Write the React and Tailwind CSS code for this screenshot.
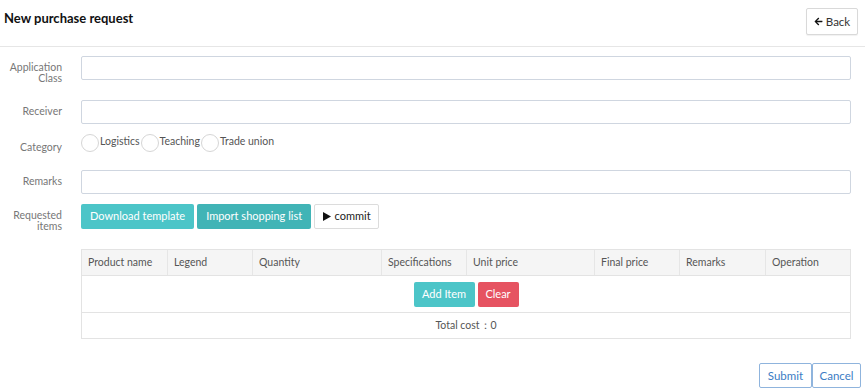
import React from "react";
import { FaArrowLeft } from "react-icons/fa";

const columns = [
  { name: "Product name", w: "w-[86px]" },
  { name: "Legend", w: "w-[85px]" },
  { name: "Quantity", w: "w-[129px]" },
  { name: "Specifications", w: "w-[85px]" },
  { name: "Unit price", w: "w-[128px]" },
  { name: "Final price", w: "w-[85px]" },
  { name: "Remarks", w: "w-[86px]" },
  { name: "Operation", w: "flex-1" },
];

// label sits a few px below the top of its field, like the original form
const Row = ({ label, children }) => (
  <div className="flex items-start">
    <div className="h-[24px] w-[62px] shrink-0 pt-[6px] text-right text-[10.5px] leading-[11px] text-[#777]">
      {label}
    </div>
    <div className="ml-[19px] flex-1">{children}</div>
  </div>
);

const Input = () => (
  <div className="h-[24px] w-full rounded-[2px] border border-[#cfd6e0] bg-white" />
);

const Radio = ({ label }) => (
  <label className="flex h-[18px] items-center">
    <span className="h-[18px] w-[18px] rounded-full border border-[#d6d6d6] bg-white" />
    <span className="ml-[1px] mr-[1px] -mt-[3px] text-[10.5px] text-[#555]">{label}</span>
  </label>
);

export default function App() {
  return (
    <div className="h-[392px] w-[865px] bg-white font-['Lato',sans-serif] text-[#333]">
      <div className="flex h-[47px] items-start justify-between border-b border-[#e6e6e6] pl-[4px] pr-[7px]">
        <h1 className="mt-[9px] text-[13px] font-bold text-[#111]">New purchase request</h1>
        <button className="mt-[8px] flex h-[27px] w-[52px] items-center justify-center gap-[3px] rounded-[2px] border border-[#d9d9d9] bg-white text-[11.5px] text-[#333] shadow-[0_1px_1px_rgba(0,0,0,0.06)]">
          <FaArrowLeft className="h-[9px] w-[9px] text-[#111]" />
          Back
        </button>
      </div>

      <div className="pr-[14px]">
        <div className="mt-[9px]">
          <Row label={<>Application<br />Class</>}>
            <Input />
          </Row>
        </div>
        <div className="mt-[20px]">
          <Row label="Receiver">
            <Input />
          </Row>
        </div>
        <div className="mt-[10px]">
          <Row label={<span className="block pt-[2px]">Category</span>}>
            <div className="flex">
              <Radio label="Logistics" />
              <Radio label="Teaching" />
              <Radio label="Trade union" />
            </div>
          </Row>
        </div>
        <div className="mt-[12px]">
          <Row label="Remarks">
            <Input />
          </Row>
        </div>
        <div className="mt-[10px]">
          <Row label={<>Requested<br />items</>}>
            <div className="flex gap-[3px]">
              <button className="h-[25px] rounded-[2px] bg-[#4cc5c8] px-[9px] text-[11px] text-white">Download template</button>
              <button className="h-[25px] rounded-[2px] bg-[#41b4b6] px-[9px] text-[11px] text-white">Import shopping list</button>
              <button className="flex h-[25px] w-[65px] items-center justify-center gap-[4px] rounded-[2px] border border-[#dcdcdc] bg-white text-[11px] text-[#222]">
                <svg width="8" height="9" viewBox="0 0 8 9">
                  <path d="M0 0 L8 4.5 L0 9 Z" fill="#111" />
                </svg>
                commit
              </button>
            </div>
            <div className="mt-[20px] border border-[#e3e3e3] text-[10.5px] text-[#555]">
              <div className="flex h-[25px] bg-[#f5f5f5]">
                {columns.map((c, i) => (
                  <div
                    key={c.name}
                    className={`${c.w} flex items-center px-[6px] ${i < columns.length - 1 ? "border-r border-[#e6e6e6]" : ""}`}
                  >
                    {c.name}
                  </div>
                ))}
              </div>
              <div className="flex h-[37px] items-center justify-center gap-[3px] border-t border-[#e3e3e3]">
                <button className="h-[25px] w-[61px] rounded-[2px] bg-[#4cc5c8] text-[11px] text-white">Add Item</button>
                <button className="h-[25px] w-[41px] rounded-[2px] bg-[#e65361] text-[11px] text-white">Clear</button>
              </div>
              <div className="flex h-[26px] items-center justify-center border-t border-[#e3e3e3]">
                Total cost：0
              </div>
            </div>
          </Row>
        </div>
      </div>

      <div className="mt-[24px] flex justify-end pr-[4px]">
        <button className="h-[25px] w-[53px] rounded-[2px] border border-[#8fb4dd] bg-white text-[11.5px] text-[#3b7cc4]">Submit</button>
        <button className="h-[25px] w-[49px] rounded-[2px] border border-[#8fb4dd] bg-white text-[11.5px] text-[#3b7cc4]">Cancel</button>
      </div>
    </div>
  );
}
